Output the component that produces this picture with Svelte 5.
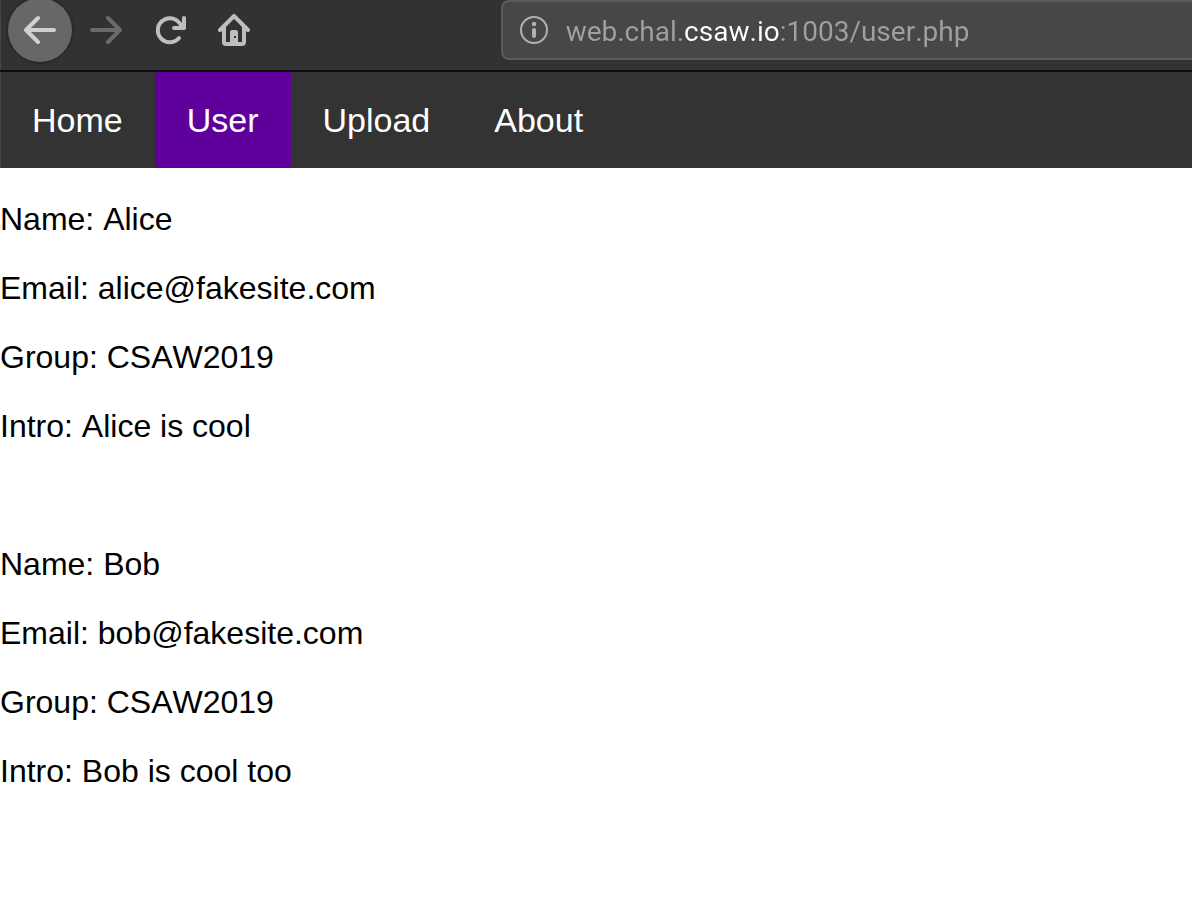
<script>
  let address = $state('web.chal.csaw.io:1003/user.php');

  const links = [
    { label: 'Home', href: '#home' },
    { label: 'User', href: '#user', active: true },
    { label: 'Upload', href: '#upload' },
    { label: 'About', href: '#about' },
  ];

  const users = [
    { Name: 'Alice', Email: 'alice@fakesite.com', Group: 'CSAW2019', Intro: 'Alice is cool' },
    { Name: 'Bob', Email: 'bob@fakesite.com', Group: 'CSAW2019', Intro: 'Bob is cool too' },
  ];
</script>

<header class="toolbar">
  <div class="controls">
    <button class="control back" type="button" aria-label="Back">
      <svg viewBox="0 0 32 32"><path d="M30 16H2.500M14 4 2 16l12 12" /></svg>
    </button>
    <button class="control forward" type="button" aria-label="Forward" disabled>
      <svg viewBox="0 0 32 32"><path d="M2 16h27.500M18 4l12 12-12 12" /></svg>
    </button>
    <button class="control" type="button" aria-label="Reload">
      <svg viewBox="0 0 32 32"><path d="M25 24A12 12 0 1 1 25 8.500L28 12M30 4v10H20" /><path class="solid" d="M29 8v6h-6z" /></svg>
    </button>
    <button class="control" type="button" aria-label="Home page">
      <svg viewBox="0 0 32 32"><path d="M2 16 16 2l14 14M6 13v15q0 2 2 2h16q2 0 2-2V13" /><path class="solid" fill-rule="evenodd" d="M12 30V18q0-2 2-2h4q2 0 2 2v12zM16 22v2h2v-2z" /></svg>
    </button>
  </div>
  <div class="address">
    <svg viewBox="0 0 28 28" aria-hidden="true">
      <circle cx="14" cy="14" r="13" />
      <circle class="solid" cx="14" cy="8" r="2.200" />
      <rect class="solid" x="12" y="12" width="4" height="10" rx="2" />
    </svg>
    <input type="text" aria-label="Address" spellcheck="false" bind:value={address} />
  </div>
</header>

<nav>
  {#each links as link}
    <a href={link.href} class:active={link.active} aria-current={link.active ? 'page' : undefined}>{link.label}</a>
  {/each}
</nav>

<main>
  {#each users as user}
    <section>
      {#each Object.entries(user) as [field, value]}
        <p>{field}: {value}</p>
      {/each}
    </section>
  {/each}
</main>

<style>
  :global(body) {
    margin: 0;
    background: #fff;
    color: #000;
    font-family: "Liberation Sans", Arial, sans-serif;
    font-kerning: none;
  }

  .toolbar {
    display: grid;
    grid-template-columns: 42% 1fr;
    box-sizing: border-box;
    height: 72px;
    border-bottom: 2px solid #0c0c0d;
    background: #323234;
    box-shadow: inset 1px 0 #464648;
    overflow: hidden;
  }

  .controls {
    display: flex;
    align-items: flex-start;
    padding-left: 8px;
  }

  .control {
    display: grid;
    place-items: center;
    box-sizing: border-box;
    width: 64px;
    height: 60px;
    padding: 0;
    border: 0;
    background: none;
    color: #bebebf;
  }

  .control svg {
    width: 32px;
    height: 32px;
  }

  svg {
    fill: none;
    stroke: currentColor;
    stroke-width: 4;
    stroke-linecap: round;
    stroke-linejoin: round;
  }

  .solid {
    fill: currentColor;
    stroke: none;
  }

  .back {
    height: 64px;
    margin-top: -2px;
    margin-right: 2px;
    border-radius: 50%;
    background: #676767;
    box-shadow: 0 0 0 2px #2a2a2b;
    color: #d0d0d0;
  }

  .forward {
    color: #6a6a6b;
  }

  .address {
    display: flex;
    align-items: center;
    gap: 18px;
    box-sizing: border-box;
    height: 60px;
    padding-left: 17px;
    border: 2px solid #5b5b5d;
    border-right: 0;
    border-radius: 8px 0 0 8px;
    background: #474749;
    color: #b1b1b2;
  }

  .address svg {
    flex: none;
    width: 28px;
    height: 28px;
    stroke-width: 2;
  }

  /* The registered domain is brighter than the rest of the address. */
  input {
    flex: 1;
    min-width: 0;
    height: 40px;
    padding: 2px 0 0;
    border: 0;
    outline: 0;
    background: linear-gradient(90deg, #a0a0a1 119px, #fff 119px, #fff 213px, #a0a0a1 213px);
    background-clip: text;
    color: transparent;
    caret-color: #fff;
    font: 28px Roboto, sans-serif;
    font-kerning: none;
  }

  nav {
    display: flex;
    background: #333;
    box-shadow: inset 1px 0 #464648;
  }

  a {
    padding: 28px 32px;
    color: #fff;
    font-size: 34px;
    line-height: 40px;
    text-decoration: none;
  }

  .active {
    background: #60009c;
  }

  main {
    display: grid;
    gap: 101px;
    padding: 33px 0;
    font-size: 32px;
    line-height: 37px;
  }

  section {
    display: grid;
    gap: 32px;
  }

  p {
    margin: 0;
  }
</style>
